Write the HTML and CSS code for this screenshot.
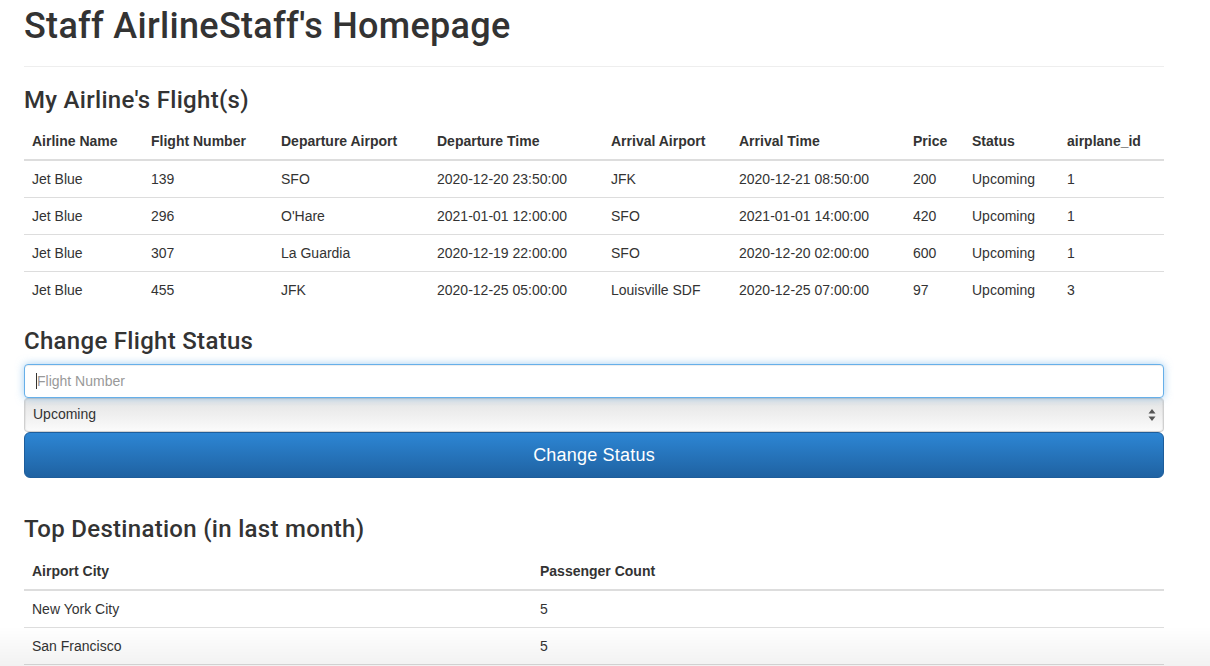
FILE: index.html
```html
<!DOCTYPE html>
<html lang="en">
<head>
<meta charset="utf-8">
<title>Staff AirlineStaff's Homepage</title>
<link rel="stylesheet" href="styles.css">
</head>
<body>
<div class="container">
  <div class="page-header">
    <h1>Staff AirlineStaff's Homepage</h1>
  </div>

  <h3>My Airline's Flight(s)</h3>
  <table class="table flights">
    <thead>
      <tr>
        <th class="c-airline">Airline Name</th>
        <th class="c-num">Flight Number</th>
        <th class="c-dep">Departure Airport</th>
        <th class="c-dtime">Departure Time</th>
        <th class="c-arr">Arrival Airport</th>
        <th class="c-atime">Arrival Time</th>
        <th class="c-price">Price</th>
        <th class="c-status">Status</th>
        <th class="c-plane">airplane_id</th>
      </tr>
    </thead>
    <tbody>
      <tr><td>Jet Blue</td><td>139</td><td>SFO</td><td>2020-12-20 23:50:00</td><td>JFK</td><td>2020-12-21 08:50:00</td><td>200</td><td>Upcoming</td><td>1</td></tr>
      <tr><td>Jet Blue</td><td>296</td><td>O'Hare</td><td>2021-01-01 12:00:00</td><td>SFO</td><td>2021-01-01 14:00:00</td><td>420</td><td>Upcoming</td><td>1</td></tr>
      <tr><td>Jet Blue</td><td>307</td><td>La Guardia</td><td>2020-12-19 22:00:00</td><td>SFO</td><td>2020-12-20 02:00:00</td><td>600</td><td>Upcoming</td><td>1</td></tr>
      <tr><td>Jet Blue</td><td>455</td><td>JFK</td><td>2020-12-25 05:00:00</td><td>Louisville SDF</td><td>2020-12-25 07:00:00</td><td>97</td><td>Upcoming</td><td>3</td></tr>
    </tbody>
  </table>

  <h3>Change Flight Status</h3>
  <form class="status-form">
    <div class="input-wrap">
      <input class="form-control focused" type="text" placeholder="Flight Number">
    </div>
    <div class="select-box">
      <span>Upcoming</span>
      <svg class="updown" width="8" height="14" viewBox="0 0 8 14"><path d="M4 1 L7.5 5.5 L0.5 5.5 Z M0.5 8.5 L7.5 8.5 L4 13 Z" fill="#555"/></svg>
    </div>
    <button type="button" class="btn-primary">Change Status</button>
  </form>

  <h3>Top Destination (in last month)</h3>
  <table class="table dest">
    <thead>
      <tr><th class="c-city">Airport City</th><th class="c-count">Passenger Count</th></tr>
    </thead>
    <tbody>
      <tr><td>New York City</td><td>5</td></tr>
      <tr><td>San Francisco</td><td>5</td></tr>
    </tbody>
  </table>
</div>
<div class="bottom-fade"></div>
</body>
</html>
```

FILE: styles.css
```css
html, body {
  margin: 0;
  padding: 0;
  background: #fff;
}
body {
  font-family: "Liberation Sans", Arial, Helvetica, sans-serif;
  font-size: 14px;
  line-height: 1.42857;
  color: #333;
}
.container {
  width: 1140px;
  margin-left: 24px;
}
.page-header {
  padding-bottom: 9px;
  margin: 0 0 20px;
  border-bottom: 1px solid #eee;
}
h1, h3 {
  font-family: Roboto, "Liberation Sans", Arial, sans-serif;
  font-weight: 500;
  line-height: 1.1;
}
h1 {
  font-size: 36px;
  margin: 7px 0 10px;
  letter-spacing: 0.3px;
}
h3 {
  font-size: 24px;
  margin: 20px 0 10px;
  letter-spacing: 0.3px;
}
.table {
  width: 100%;
  border-collapse: collapse;
  border-spacing: 0;
  table-layout: fixed;
  margin-bottom: 20px;
}
.table th,
.table td {
  box-sizing: border-box;
  padding: 8px;
  text-align: left;
  line-height: 20px;
  white-space: nowrap;
}
.table th {
  font-weight: bold;
  vertical-align: bottom;
  border-bottom: 2px solid #ddd;
}
.table td {
  vertical-align: top;
  border-top: 1px solid #ddd;
}
.table tbody tr:first-child td {
  border-top: 0;
}
.c-airline { width: 119px; }
.c-num { width: 130px; }
.c-dep { width: 156px; }
.c-dtime { width: 174px; }
.c-arr { width: 128px; }
.c-atime { width: 174px; }
.c-price { width: 59px; }
.c-status { width: 95px; }
.c-plane { width: 105px; }
.c-city { width: 508px; }
.c-count { width: 632px; }
.dest tbody tr:last-child td {
  border-bottom: 1px solid #ddd;
}

.status-form {
  display: flex;
  flex-direction: column;
  margin: 0 0 38px;
}
.input-wrap {
  position: relative;
}
.input-wrap::before {
  content: "";
  position: absolute;
  left: 12px;
  top: 9px;
  width: 1px;
  height: 16px;
  background: #333;
}
.form-control {
  display: block;
  box-sizing: border-box;
  width: 100%;
  height: 34px;
  padding: 6px 12px;
  font-family: inherit;
  font-size: 14px;
  line-height: 20px;
  color: #555;
  background: #fff;
  border: 1px solid #ccc;
  border-radius: 4px;
  outline: none;
}
.form-control::placeholder {
  color: #999;
}
.form-control.focused {
  border-color: #66afe9;
  box-shadow: inset 0 1px 1px rgba(0,0,0,.075), 0 0 8px rgba(102,175,233,.6);
}
.select-box {
  box-sizing: border-box;
  height: 34px;
  display: flex;
  align-items: center;
  justify-content: space-between;
  padding: 0 7px 0 8px;
  color: #333;
  background: linear-gradient(to bottom, #e4e4e4 0%, #efefef 50%, #fbfbfb 100%);
  border: 1px solid #d0d0d0;
  border-top-color: #c8c8c8;
  border-radius: 4px;
  box-shadow: inset 1px 0 1px rgba(0,0,0,.06), inset -1px 0 1px rgba(0,0,0,.06);
}
.updown {
  display: block;
}
.btn-primary {
  display: block;
  width: 100%;
  height: 46px;
  padding: 10px 16px;
  font-family: inherit;
  font-size: 18px;
  line-height: 24px;
  color: #fff;
  background: linear-gradient(to bottom, #2d86d4 0%, #1f62a2 100%);
  border: 1px solid #1d5d9b;
  border-radius: 6px;
  text-align: center;
  letter-spacing: 0.2px;
}
.bottom-fade {
  position: fixed;
  left: 0;
  right: 0;
  bottom: 0;
  height: 40px;
  background: linear-gradient(to bottom, rgba(0,0,0,0) 0%, rgba(0,0,0,.05) 100%);
  pointer-events: none;
}
```
